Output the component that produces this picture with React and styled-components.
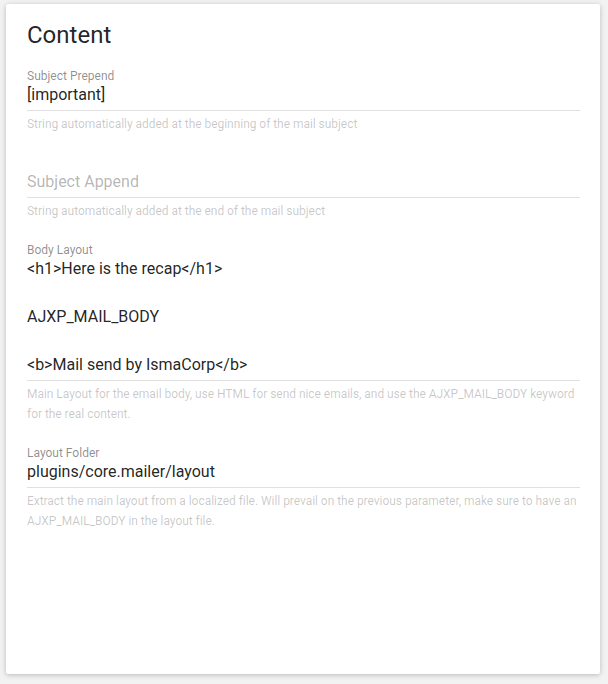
import React from "react";
import styled, { createGlobalStyle } from "styled-components";

const Global = createGlobalStyle`
  html, body { margin: 0; padding: 0; background: #f2f2f2; }
  body { font-family: Roboto, "Noto Sans", "Liberation Sans", sans-serif; }
`;

const Card = styled.div`
  box-sizing: border-box;
  margin: 4px 8px 10px 6px;
  height: 670px;
  background: #fff;
  border-radius: 2px;
  box-shadow: 0 1px 6px rgba(0, 0, 0, 0.12), 0 1px 4px rgba(0, 0, 0, 0.12);
  padding: 15px 20px 0 21px;
`;

const Title = styled.h3`
  margin: 0;
  font-size: 24px;
  line-height: 32px;
  font-weight: 400;
  color: rgba(0, 0, 0, 0.87);
`;

const Field = styled.div`
  margin-top: ${(p) => (p.$first ? "18px" : "22px")};
  display: flex;
  flex-direction: column;
`;

const Label = styled.div`
  font-size: 12px;
  line-height: 14px;
  height: 14px;
  color: rgba(0, 0, 0, 0.45);
`;

const Input = styled.div`
  font-size: 16px;
  line-height: 24px;
  color: ${(p) => (p.$placeholder ? "rgba(0,0,0,0.3)" : "rgba(0,0,0,0.87)")};
  padding-bottom: 3px;
  border-bottom: 1px solid #e0e0e0;
  white-space: pre-wrap;
`;

const Helper = styled.div`
  margin-top: 3px;
  font-size: 12px;
  line-height: 20px;
  letter-spacing: -0.04px;
  color: rgba(0, 0, 0, 0.22);
`;

const fields = [
  {
    label: "Subject Prepend",
    value: "[important]",
    help: "String automatically added at the beginning of the mail subject",
  },
  {
    label: "",
    placeholder: "Subject Append",
    help: "String automatically added at the end of the mail subject",
  },
  {
    label: "Body Layout",
    value: "<h1>Here is the recap</h1>\n\nAJXP_MAIL_BODY\n\n<b>Mail send by IsmaCorp</b>",
    help: "Main Layout for the email body, use HTML for send nice emails, and use the AJXP_MAIL_BODY keyword for the real content.",
  },
  {
    label: "Layout Folder",
    value: "plugins/core.mailer/layout",
    help: "Extract the main layout from a localized file. Will prevail on the previous parameter, make sure to have an AJXP_MAIL_BODY in the layout file.",
  },
];

export default function App() {
  return (
    <>
      <Global />
      <Card>
        <Title>Content</Title>
        {fields.map((f, i) => (
          <Field key={i} $first={i === 0}>
            <Label>{f.label}</Label>
            <Input $placeholder={!!f.placeholder}>{f.value || f.placeholder}</Input>
            <Helper>{f.help}</Helper>
          </Field>
        ))}
      </Card>
    </>
  );
}
